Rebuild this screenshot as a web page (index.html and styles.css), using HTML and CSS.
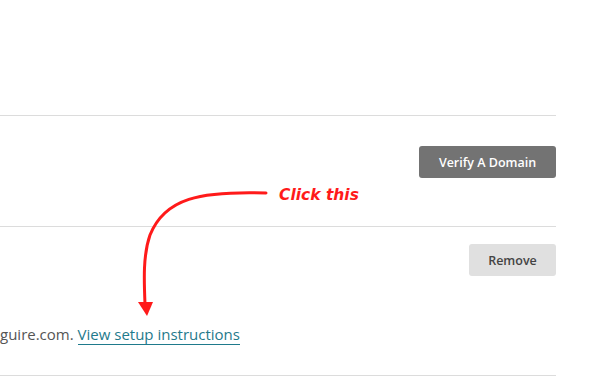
FILE: index.html
```html
<!DOCTYPE html>
<html lang="en">
<head>
  <meta charset="UTF-8">
  <title>Domains</title>
  <link rel="stylesheet" href="styles.css">
</head>
<body>
  <div class="settings">
    <div class="row row-top"></div>
    <div class="row row-verify">
      <button class="btn btn-dark">Verify A Domain</button>
    </div>
    <div class="row row-domain">
      <div class="actions">
        <button class="btn btn-light">Remove</button>
      </div>
      <p class="note">guire.com. <a href="#">View setup instructions</a></p>
    </div>

    <!-- annotation -->
    <svg class="arrow" width="601" height="389" viewBox="0 0 601 389">
      <path d="M266 193 C 200 191, 165 198, 150 235 C 143 255, 144 280, 145 304" fill="none" stroke="#ff1a1a" stroke-width="3" stroke-linecap="round"/>
      <polygon points="138,302 153,302 147,316" fill="#ff1a1a"/>
    </svg>
    <span class="callout">Click this</span>
  </div>
</body>
</html>
```

FILE: styles.css
```css
* {
  margin: 0;
  padding: 0;
  box-sizing: border-box;
}

body {
  font-family: "Open Sans", Arial, sans-serif;
  background-color: #fff;
  color: #555;
}

.settings {
  position: relative;
  width: 556px;
  height: 389px;
}

.row {
  border-bottom: 1px solid #dcdcdc;
}

.row-top {
  height: 116px;
}

.row-verify {
  height: 111px;
  display: flex;
  justify-content: flex-end;
  padding-top: 30px;
}

.row-domain {
  height: 149px;
  padding-top: 17px;
}

.actions {
  display: flex;
  justify-content: flex-end;
}

.btn {
  font-family: "Open Sans", Arial, sans-serif;
  font-size: 12.5px;
  font-weight: 600;
  height: 32px;
  border: none;
  border-radius: 3px;
  cursor: pointer;
}

.btn-dark {
  width: 137px;
  background-color: #737373;
  color: #fff;
}

.btn-light {
  width: 87px;
  background-color: #e0e0e0;
  color: #444;
}

.note {
  margin-top: 48px;
  font-size: 15px;
  line-height: 20px;
  color: #555;
}

.note a {
  color: #1f7a8c;
  text-decoration: none;
  border-bottom: 1px solid #1f7a8c;
}

.arrow {
  position: absolute;
  left: 0;
  top: 0;
  pointer-events: none;
}

.callout {
  position: absolute;
  left: 279px;
  top: 186px;
  font-family: "DejaVu Sans", sans-serif;
  font-size: 15.5px;
  font-weight: bold;
  font-style: italic;
  color: #ff1a1a;
}
```
